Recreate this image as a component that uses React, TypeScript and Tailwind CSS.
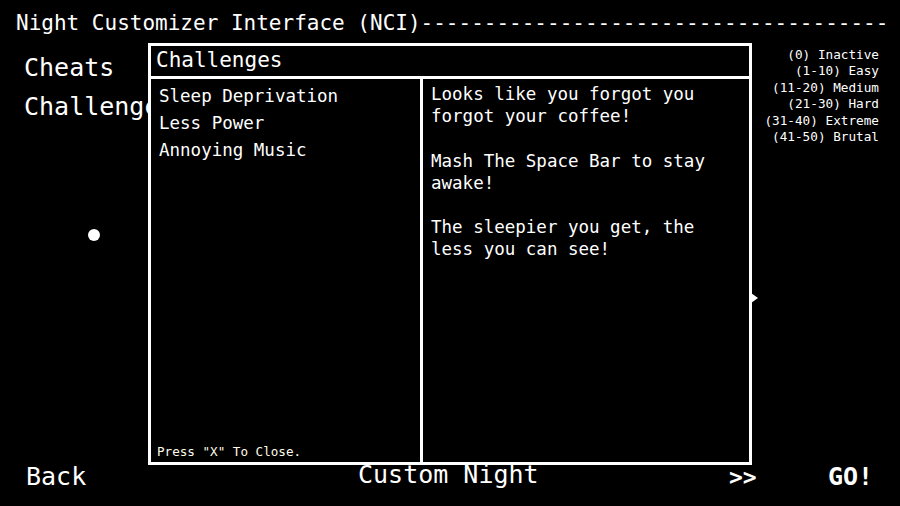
import React from "react";

const legend = [
  "(0) Inactive",
  "(1-10) Easy",
  "(11-20) Medium",
  "(21-30) Hard",
  "(31-40) Extreme",
  "(41-50) Brutal",
];

const challenges = ["Sleep Deprivation", "Less Power", "Annoying Music"];

export default function App() {
  return (
    <main className="relative w-[900px] h-[506px] overflow-hidden bg-black text-white font-['DejaVu_Sans_Mono','Liberation_Mono',monospace]">
      <div className="flex flex-col h-full">
        <div className="pl-4 pt-[10px] text-[21px] leading-[26px] whitespace-nowrap">
          Night Customizer Interface (NCI)-------------------------------------
        </div>

        <div className="flex flex-1">
          <div className="w-[148px] pl-6 pt-[12px] whitespace-nowrap">
            <div className="text-[25px] leading-[39px]">Cheats</div>
            <div className="text-[25px] leading-[39px]">Challenges</div>
            <div className="ml-[64px] mt-[103px] w-[12px] h-[12px] rounded-full bg-white" />
          </div>
          <div className="flex-1" />
          <div className="pr-[21px] pt-[11px] text-right text-[12.7px] leading-[16.4px] whitespace-nowrap">
            {legend.map((l) => (
              <div key={l}>{l}</div>
            ))}
          </div>
        </div>

        <div className="flex items-center h-[40px] pb-[18px] whitespace-nowrap">
          <div className="w-[358px] pl-[26px] text-[25px]">Back</div>
          <div className="w-[371px] text-[25px] -mt-[4px]">Custom Night</div>
          <div className="w-[99px] text-[23px] font-bold">&gt;&gt;</div>
          <div className="text-[25px] font-bold">GO!</div>
        </div>
      </div>

      {/* small pointer on the dialog's right edge */}
      <div className="absolute left-[751px] top-[293px] w-0 h-0 border-y-[5px] border-y-transparent border-l-[7px] border-l-white" />

      <section className="absolute left-[148px] top-[43px] w-[604px] h-[422px] flex flex-col border-[3px] border-white bg-black">
        <header className="h-[33px] border-b-[3px] border-white pl-[5px] pt-[1px] text-[21px] leading-[26px]">
          Challenges
        </header>
        <div className="flex flex-1">
          <div className="w-[272px] flex flex-col border-r-[3px] border-white pl-[8px] pt-[4px]">
            {challenges.map((c) => (
              <div key={c} className="text-[17.5px] leading-[27px]">
                {c}
              </div>
            ))}
            <div className="mt-auto mb-[2px] -ml-[2px] text-[12.6px] leading-[16px] text-[#fffbe8]">
              Press "X" To Close.
            </div>
          </div>
          <div className="flex-1 pl-[8px] pt-[4px] text-[17.5px] leading-[22.2px]">
            <p>Looks like you forgot you</p>
            <p>forgot your coffee!</p>
            <p>&nbsp;</p>
            <p>Mash The Space Bar to stay</p>
            <p>awake!</p>
            <p>&nbsp;</p>
            <p>The sleepier you get, the</p>
            <p>less you can see!</p>
          </div>
        </div>
      </section>
    </main>
  );
}
